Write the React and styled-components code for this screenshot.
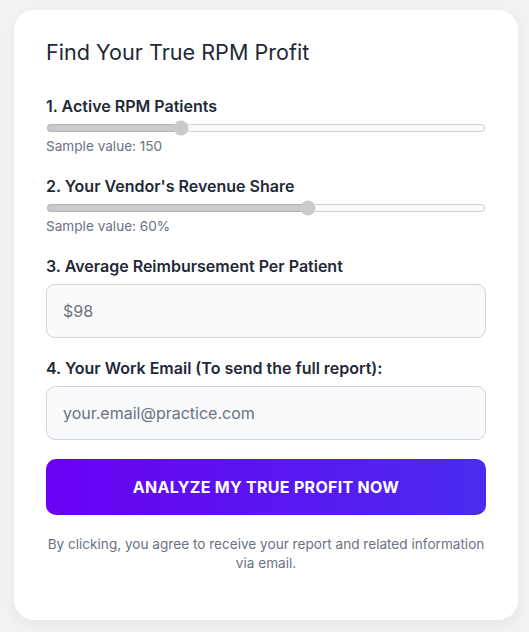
import React from 'react'
import styled, { createGlobalStyle } from 'styled-components'

const Global = createGlobalStyle`
  html, body { margin: 0; padding: 0; }
  body {
    background: #f1f2f4;
    font-family: Inter, "Liberation Sans", sans-serif;
  }
`

export default function App() {
  return (
    <Page>
      <Global />
      <Card>
        <Title>Find Your True RPM Profit</Title>

        <Field $slider>
          <Label>1. Active RPM Patients</Label>
          <Range type="range" min="0" max="500" defaultValue="150" disabled />
          <Hint>Sample value: 150</Hint>
        </Field>

        <Field $slider>
          <Label>2. Your Vendor's Revenue Share</Label>
          <Range type="range" min="0" max="100" defaultValue="60" disabled />
          <Hint>Sample value: 60%</Hint>
        </Field>

        <Field>
          <Label>3. Average Reimbursement Per Patient</Label>
          <TextInput type="text" placeholder="$98" />
        </Field>

        <Field $last>
          <Label>4. Your Work Email (To send the full report):</Label>
          <TextInput type="email" placeholder="your.email@practice.com" />
        </Field>

        <Submit type="button">Analyze My True Profit Now</Submit>

        <Disclaimer>
          By clicking, you agree to receive your report and related information via email.
        </Disclaimer>
      </Card>
    </Page>
  )
}

const Page = styled.div`
  padding: 10px 11px 12px 14px;
`

const Card = styled.div`
  background: #fff;
  border-radius: 20px;
  padding: 30px 32px 47px;
  box-shadow: 0 4px 14px rgba(0, 0, 0, 0.05);
`

const Title = styled.h2`
  margin: 0 0 30px;
  font-size: 21.6px;
  font-weight: 400;
  line-height: 1.2;
  color: #1f2937;
`

const Field = styled.div`
  margin-bottom: ${p => (p.$slider ? '22px' : p.$last ? '19px' : '20px')};
`

const Label = styled.label`
  display: block;
  font-size: 16px;
  font-weight: 600;
  color: #1f2937;
  margin-bottom: 8px;
`

const Range = styled.input`
  display: block;
  width: 100%;
  margin: -4px 0 2px;
`

const Hint = styled.div`
  font-size: 13.6px;
  color: #6b7280;
`

const TextInput = styled.input`
  display: block;
  box-sizing: border-box;
  width: 100%;
  height: 54px;
  padding: 0 16px;
  border: 1px solid #d1d5db;
  border-radius: 9px;
  background: #f9fafb;
  font-family: Inter, "Liberation Sans", sans-serif;
  font-size: 16px;
  color: #111827;
  &::placeholder { color: #6b7280; }
`

const Submit = styled.button`
  display: block;
  width: 100%;
  height: 56px;
  border: none;
  border-radius: 10px;
  background: linear-gradient(90deg, #6a00f4 0%, #4a2bef 100%);
  color: #fff;
  font-family: Inter, "Liberation Sans", sans-serif;
  font-size: 16px;
  font-weight: 700;
  letter-spacing: 0.3px;
  text-transform: uppercase;
`

const Disclaimer = styled.p`
  margin: 20px 0 0;
  text-align: center;
  font-size: 13.6px;
  line-height: 19px;
  color: #6b7280;
`
